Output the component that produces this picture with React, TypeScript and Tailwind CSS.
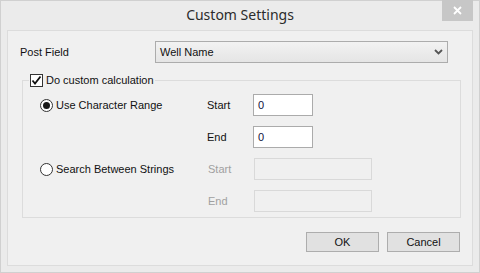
import { FC } from 'react';

const Radio: FC<{ checked?: boolean }> = ({ checked }) => (
  <span className="w-[13px] h-[13px] rounded-full border border-[#333] bg-white flex items-center justify-center shrink-0">
    {checked && <span className="w-[7px] h-[7px] rounded-full bg-[#1a1a1a]" />}
  </span>
);

const TextBox: FC<{ value?: string; disabled?: boolean; className?: string }> = ({ value, disabled, className }) => (
  <div
    className={
      disabled
        ? `h-[22px] border border-[#d9d9d9] bg-[#f0f0f0] ${className ?? ''}`
        : `h-[22px] border border-[#ababab] bg-white pl-[4px] flex items-center text-[11px] text-[#101040] ${className ?? ''}`
    }
  >
    {value}
  </div>
);

const Button: FC<{ label: string }> = ({ label }) => (
  <button className="w-[73px] h-[20px] border border-[#adadad] bg-[#e1e1e1] text-[11px] text-[#111] flex items-center justify-center">
    {label}
  </button>
);

export default function App() {
  return (
    <div className="w-[480px] h-[273px] bg-[#ebebeb] border border-[#d0d0d0] flex flex-col font-['Liberation_Sans',Arial,sans-serif] text-[11px] text-[#111]">
      {/* title bar */}
      <div className="h-[29px] relative flex items-center justify-center shrink-0">
        <span className="font-['Noto_Sans',sans-serif] text-[14px] text-[#2b2b2b] leading-none -mt-[2px]">Custom Settings</span>
        <div className="absolute right-[6px] top-[-1px] w-[31px] h-[21px] bg-[#c7c7c7] flex items-center justify-center">
          <svg width="9" height="9" viewBox="0 0 9 9">
            <path d="M1 1L8 8M8 1L1 8" stroke="#fff" strokeWidth="1.8" />
          </svg>
        </div>
      </div>

      {/* client area */}
      <div className="mx-[6px] h-[236px] border border-[#dcdcdc] bg-[#f0f0f0] flex flex-col px-[14px] pt-[10px]">
        <div className="flex items-center h-[22px]">
          <span className="w-[133px] -ml-[2px]">Post Field</span>
          <div className="ml-[2px] w-[293px] h-[22px] border border-[#acacac] bg-gradient-to-b from-[#f2f2f2] to-[#e5e5e5] flex items-center justify-between pl-[4px] pr-[4px]">
            <span>Well Name</span>
            <svg width="9" height="6" viewBox="0 0 9 6">
              <path d="M1 1L4.5 4.5L8 1" stroke="#555" strokeWidth="1.8" fill="none" />
            </svg>
          </div>
        </div>

        <fieldset className="mt-[10px] mr-[-3px] h-[145px] border border-[#dcdcdc]">
          <legend className="ml-[6px] px-[1px] flex items-center gap-[3px] h-[14px]">
            <span className="w-[13px] h-[13px] border border-[#333] bg-white flex items-center justify-center">
              <svg width="11" height="11" viewBox="0 0 11 11">
                <path d="M1.5 5.5L4 8.5L9.5 1.5" stroke="#111" strokeWidth="1.8" fill="none" />
              </svg>
            </span>
            <span>Do custom calculation</span>
          </legend>

          <div className="grid grid-cols-[167px_46px_1fr] grid-rows-[22px_22px_22px_22px] gap-y-[10px] items-center mt-[7px] pl-[17px]">
            <div className="flex items-center gap-[3px]">
              <Radio checked />
              <span>Use Character Range</span>
            </div>
            <span>Start</span>
            <TextBox value="0" className="w-[60px]" />

            <div />
            <span>End</span>
            <TextBox value="0" className="w-[60px]" />

            <div className="flex items-center gap-[3px]">
              <Radio />
              <span>Search Between Strings</span>
            </div>
            <span className="text-[#a0a0a0] pl-[1px]">Start</span>
            <TextBox disabled className="w-[118px] ml-[1px]" />

            <div />
            <span className="text-[#a0a0a0] pl-[1px]">End</span>
            <TextBox disabled className="w-[118px] ml-[1px]" />
          </div>
        </fieldset>

        <div className="flex justify-end gap-[8px] mt-[14px] mr-[-2px]">
          <Button label="OK" />
          <Button label="Cancel" />
        </div>
      </div>
    </div>
  );
}
